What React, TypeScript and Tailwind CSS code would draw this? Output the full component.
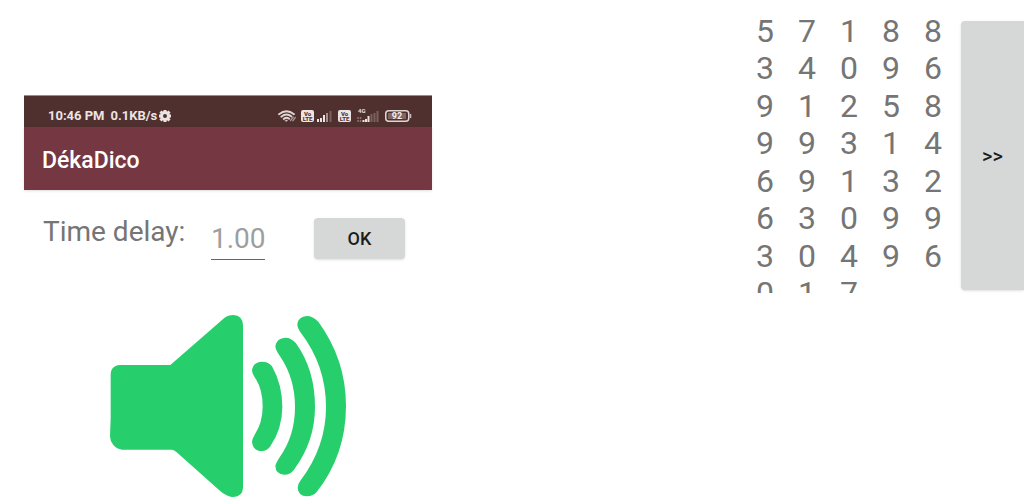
import React from "react";

const digitRows: string[] = ["57188", "34096", "91258", "99314", "69132", "63099", "30496", "017"];

function GearIcon() {
  return (
    <svg className="ml-[2px] size-3" viewBox="0 0 24 24" fill="none" stroke="#ece4e3" aria-hidden="true">
      <circle cx="12" cy="12" r="7" strokeWidth="6" />
      <path
        d="M12 0v4M12 20v4M0 12h4M20 12h4M3 3l4 4M17 17l4 4M3 21l4-4M17 7l4-4"
        strokeWidth="6"
      />
    </svg>
  );
}

function WifiIcon() {
  return (
    <svg className="h-3 w-[19px]" viewBox="0 0 19 12" fill="none" stroke="#e0d6d4" strokeLinecap="round" aria-hidden="true">
      <path d="M1 4.200Q8.500-1.800 16 4.200M3.300 6.700Q8.500 2.400 13.500 6.500M5.700 9Q8.500 6.700 11.200 8.700" strokeWidth="1.800" />
      <path d="M7.200 10.200h2.400l-1.200 1.200z" fill="#e0d6d4" strokeWidth=".5" />
      <path d="M12.500 10.500l2.800-3.200M14.800 10.800l2.600-3.400" stroke="#a99694" strokeWidth="1.300" />
    </svg>
  );
}

function VolteIcon() {
  return (
    <svg className="h-3 w-[13px]" viewBox="0 0 13 12" aria-label="VoLTE">
      <rect width="13" height="12" rx="2" fill="#ece4e3" />
      <g fill="#50302f" fontFamily="Roboto, sans-serif" fontWeight="800" textAnchor="middle">
        <text x="6.500" y="5.500" fontSize="6">Vo</text>
        <text x="6.500" y="11" fontSize="6">LTE</text>
      </g>
    </svg>
  );
}

function SignalIcon() {
  return (
    <svg className="h-3 w-[15px]" viewBox="0 0 15 12" aria-hidden="true">
      <path d="M0 9h2v3H0zM3 8h2v4H3zM6 5h2v7H6z" fill="#ece4e3" />
      <path d="M9 3h2v9H9z" fill="#a38f8d" />
      <path d="M12.500 1h2v11h-2z" fill="#7c605e" />
    </svg>
  );
}

function MobileDataIcon() {
  return (
    <svg className="h-4 w-[22px]" viewBox="0 0 22 16" aria-label="4G">
      <text x="1" y="5" fontSize="6" fontWeight="800" fontFamily="Roboto, sans-serif" fill="#e0d6d4">4G</text>
      <path d="M1 9v5M3.500 9v5" stroke="#8b7270" strokeWidth="1.500" strokeDasharray="2 1" />
      <path d="M5.500 12h2v2h-2zM8 11h2v3H8zM10.500 8h2v6h-2z" fill="#ece4e3" />
      <path d="M13.500 6h2v8h-2zM16.500 5h2v9h-2zM19.500 3h2v11h-2z" fill="#7c605e" />
    </svg>
  );
}

function BatteryIcon() {
  return (
    <svg className="h-3 w-[27px]" viewBox="0 0 27 12" aria-label="Battery 92%">
      <rect x=".75" y=".75" width="23" height="10.500" rx="3" fill="none" stroke="#e0d6d4" strokeWidth="1.500" />
      <rect x="3" y="3" width="18" height="6" fill="#806765" />
      <path d="M25.500 4v4" stroke="#cbbcba" strokeWidth="1.500" />
      <text x="12" y="9" fontSize="9" fontWeight="700" fontFamily="Roboto, sans-serif" textAnchor="middle" fill="#f4eeed">92</text>
    </svg>
  );
}

function SpeakerIcon() {
  return (
    <svg className="ml-[76px] mt-[45px] h-[195px] w-[260px]" viewBox="0 0 780 585" aria-label="Sound">
      <path
        d="M60 180H211L372 40Q384 30 400 30Q428 32 429 60V548Q428 574 400 576Q384 576 364 561L230 442Q222 434 216 434H66Q50 432 40 420Q30 408 30 394L32 340V215Q30 182 60 180Z"
        fill="#27cf6c"
      />
      <g fill="#27cf6c">
        <path d="M486 170Q507 170 516 184Q547 240 547 305Q547 370 511 424Q502 438 486 438Q459 438 456 411Q456 402 464 389Q488 352 488 305Q488 255 468 223Q456 206 456 196Q460 171 486 170Z" />
        <path d="M556 98Q574 98 588 115Q645 195 645 306Q645 409 582 494Q571 509 553 509Q527 508 526 482Q528 474 538 458Q585 393 585 306Q585 220 540 154Q526 134 526 124Q530 99 556 98Z" />
        <path d="M621 33Q638 33 655 50Q738 164 738 302Q738 449 650 561Q638 574 621 574Q594 573 593 548Q593 538 602 526Q678 425 678 306Q678 183 603 84Q592 70 592 58Q594 35 621 33Z" />
      </g>
    </svg>
  );
}

function DelayScreen() {
  return (
    <section className="w-[408px] shrink-0 pt-[95px]">
      <header className="border-t border-[#9b8c87] text-white">
        <div className="flex h-[31px] items-center bg-[#50302f] pl-6 pr-5 pt-2 text-[13px] leading-4 font-bold text-[#ece4e3]">
          <span>10:46 PM</span>
          <span className="ml-[6px]">0.1KB/s</span>
          <GearIcon />
          <div className="ml-auto flex items-center">
            <WifiIcon />
            <span className="ml-1 flex gap-[3px]">
              <VolteIcon />
              <SignalIcon />
            </span>
            <span className="ml-[6px] flex items-center gap-[6px]">
              <VolteIcon />
              <MobileDataIcon />
              <BatteryIcon />
            </span>
          </div>
        </div>
        <div className="flex h-[63px] items-center bg-[#753742] px-[18px] pt-1 shadow-sm">
          <h1 className="text-[23px] leading-7 font-medium">DékaDico</h1>
        </div>
      </header>
      <form className="flex items-start pl-[19px] pt-7" onSubmit={(e) => e.preventDefault()}>
        <label htmlFor="delay" className="w-[168px] text-[28px] leading-7 text-[#757575]">
          Time delay:
        </label>
        <input
          id="delay"
          type="text"
          inputMode="decimal"
          placeholder="1.00"
          className="h-[42px] w-[54px] border-b border-[#666666] bg-transparent text-[28px] leading-8 outline-none placeholder:text-[#9e9e9e]"
        />
        <button
          type="submit"
          className="ml-[49px] h-[41px] w-[91px] rounded-sm bg-[#d6d8d7] text-[18px] font-medium text-[#1c1c1c] shadow-sm"
        >
          OK
        </button>
      </form>
      <SpeakerIcon />
    </section>
  );
}

function DigitsScreen() {
  return (
    <section className="flex items-start gap-[7px]">
      <div className="mt-3 h-[281px] overflow-hidden">
        <table className="h-[300px] w-[210px] table-fixed text-center text-[32px] leading-8 text-[#757575]">
          <tbody>
            {digitRows.map((row) => (
              <tr key={row}>
                {Array.from({ length: 5 }, (_, i) => (
                  <td key={i} className="p-0">
                    {row[i] ?? ""}
                  </td>
                ))}
              </tr>
            ))}
          </tbody>
        </table>
      </div>
      <button
        type="button"
        className="mt-[21px] h-[269px] w-[63px] rounded-l-sm bg-[#d6d8d7] text-[20px] font-medium text-[#1c1c1c] shadow-sm"
      >
        &gt;&gt;
      </button>
    </section>
  );
}

export default function App() {
  return (
    <main className="flex min-h-screen justify-between bg-white pl-6 font-[Roboto,sans-serif]">
      <DelayScreen />
      <DigitsScreen />
    </main>
  );
}
